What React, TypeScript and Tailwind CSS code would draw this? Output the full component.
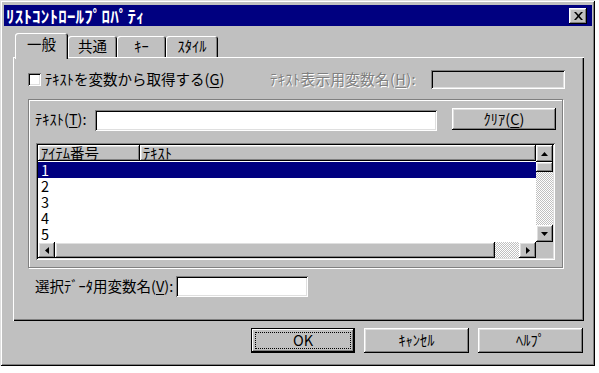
import React from "react";

// Win9x style bevels
const raised =
  "shadow-[inset_-1px_-1px_0_#000,inset_1px_1px_0_#fff,inset_-2px_-2px_0_#808080,inset_2px_2px_0_#dfdfdf]";
const sunken =
  "shadow-[inset_1px_1px_0_#808080,inset_-1px_-1px_0_#fff,inset_2px_2px_0_#000,inset_-2px_-2px_0_#dfdfdf]";
const dither =
  "bg-[image:repeating-conic-gradient(#fff_0_25%,#c0c0c0_0_50%)] bg-[length:2px_2px]";

function Arrow({ dir }: { dir: "up" | "down" | "left" | "right" }) {
  const pts = {
    up: "3.5,0 7,4 0,4",
    down: "0,0 7,0 3.5,4",
    left: "4,0 4,7 0,3.5",
    right: "0,0 4,3.5 0,7",
  }[dir];
  const vertical = dir === "up" || dir === "down";
  return (
    <svg width={vertical ? 7 : 4} height={vertical ? 4 : 7} viewBox={vertical ? "0 0 7 4" : "0 0 4 7"}>
      <polygon points={pts} fill="#000" />
    </svg>
  );
}

function Key({ k }: { k: string }) {
  return <span className="underline underline-offset-2">{k}</span>;
}

function Tab({ label, active, w }: { label: string; active?: boolean; w: string }) {
  return (
    <div
      className={`${w} flex items-center justify-center rounded-t-[3px] bg-[#c0c0c0] shadow-[inset_1px_1px_0_#fff,inset_-1px_0_0_#000,inset_-2px_0_0_#808080] ${
        active ? "h-[26px] pb-[3px]" : "mt-[3px] h-[21px]"
      }`}
    >
      {label}
    </div>
  );
}

export default function App() {
  const rows = ["1", "2", "3", "4", "5"];

  return (
    <div className="w-[599px] h-[373px] bg-white font-['Noto_Sans_CJK_JP',sans-serif] text-[14.5px] leading-none text-black">
      {/* ウィンドウ */}
      <div className="w-[595px] h-[366px] bg-[#c0c0c0] pt-[5px] pl-[4px] shadow-[inset_1px_1px_0_#dfdfdf,inset_-1px_-1px_0_#000,inset_2px_2px_0_#fff,inset_-2px_-2px_0_#808080]">
        {/* タイトルバー */}
        <div className="w-[588px] h-[21px] bg-[#000080] flex items-center justify-between pl-[2px] pr-[5px]">
          <span className="text-white font-bold text-[17px] tracking-[0.2px]">ﾘｽﾄｺﾝﾄﾛｰﾙﾌﾟﾛﾊﾟﾃｨ</span>
          <button className={`w-[18px] h-[16px] bg-[#c0c0c0] flex items-center justify-center ${raised}`}>
            <svg width="9" height="8" viewBox="0 0 9 8">
              <path d="M0 0h2l2.5 2.8L7 0h2L5.5 4 9 8H7L4.5 5.2 2 8H0l3.5-4z" fill="#000" />
            </svg>
          </button>
        </div>

        <div className="pl-[9px]">
          {/* タブ */}
          <div className="relative z-10 flex items-start h-[24px] mt-[7px] pl-[2px]">
            <Tab label="一般" active w="w-[53px]" />
            <Tab label="共通" w="w-[49px]" />
            <Tab label="ｷｰ" w="w-[49px]" />
            <Tab label="ｽﾀｲﾙ" w="w-[52px]" />
          </div>

          {/* タブパネル */}
          <div className="w-[571px] h-[264px] flex flex-col shadow-[inset_1px_1px_0_#fff,inset_-1px_-1px_0_#000,inset_-2px_-2px_0_#808080]">
            <div className="flex items-center h-[19px] mt-[13px] pl-[15px]">
              <div className="w-[242px] flex items-center gap-[4px]">
                <span className={`w-[13px] h-[13px] bg-white ${sunken}`} />
                <span>
                  ﾃｷｽﾄを変数から取得する(<Key k="G" />)
                </span>
              </div>
              <span className="w-[161px] text-[#808080] [text-shadow:1px_1px_0_#fff] tracking-[0.4px]">
                ﾃｷｽﾄ表示用変数名(<Key k="H" />):
              </span>
              <div className={`w-[134px] h-[19px] bg-[#c0c0c0] ${sunken}`} />
            </div>

            {/* グループ */}
            <div className="ml-[15px] mt-[10px] w-[535px] h-[169px] border border-[#808080] shadow-[inset_1px_1px_0_#fff,1px_1px_0_#fff] flex flex-col">
              <div className="flex items-center h-[22px] mt-[8px] pl-[6px]">
                <span className="w-[60px]">
                  ﾃｷｽﾄ(<Key k="T" />):
                </span>
                <div className={`w-[342px] h-[21px] mt-[3px] bg-white ${sunken}`} />
                <button className={`ml-[15px] w-[104px] h-[22px] bg-[#c0c0c0] ${raised}`}>
                  ｸﾘｱ(<Key k="C" />)
                </button>
              </div>

              {/* リストビュー */}
              <div className={`ml-[7px] mt-[13px] w-[519px] h-[117px] bg-white p-[2px] ${sunken}`}>
                <div className="flex h-full">
                  <div className="flex-1 flex flex-col min-w-0">
                    <div className="flex h-[16px] bg-[#c0c0c0]">
                      <div className={`w-[102px] flex items-center pl-[3px] ${raised}`}>ｱｲﾃﾑ番号</div>
                      <div className={`flex-1 flex items-center pl-[3px] ${raised}`}>ﾃｷｽﾄ</div>
                    </div>
                    <div className="flex-1 flex flex-col pt-[1px]">
                      {rows.map((r, i) => (
                        <div
                          key={r}
                          className={`h-[16px] flex items-center pl-[3px] ${
                            i === 0 ? "bg-[#000080] text-white" : ""
                          }`}
                        >
                          {r}
                        </div>
                      ))}
                    </div>
                    {/* 横スクロールバー */}
                    <div className="h-[16px] flex bg-[#c0c0c0]">
                      <div className={`w-[17px] flex items-center justify-center ${raised}`}>
                        <Arrow dir="left" />
                      </div>
                      <div className={`w-[440px] ${raised}`} />
                      <div className={`flex-1 ${dither}`} />
                      <div className={`w-[17px] flex items-center justify-center ${raised}`}>
                        <Arrow dir="right" />
                      </div>
                    </div>
                  </div>
                  {/* 縦スクロールバー */}
                  <div className="w-[17px] flex flex-col bg-[#c0c0c0]">
                    <div className={`h-[17px] flex items-center justify-center ${raised}`}>
                      <Arrow dir="up" />
                    </div>
                    <div className={`h-[10px] ${raised}`} />
                    <div className={`flex-1 ${dither}`} />
                    <div className={`h-[17px] flex items-center justify-center ${raised}`}>
                      <Arrow dir="down" />
                    </div>
                    <div className="h-[16px]" />
                  </div>
                </div>
              </div>
            </div>

            <div className="flex items-center h-[22px] mt-[7px] pl-[22px]">
              <span className="w-[141px]">
                選択ﾃﾞｰﾀ用変数名(<Key k="V" />):
              </span>
              <div className={`w-[132px] h-[21px] bg-white ${sunken}`} />
            </div>
          </div>

          {/* ボタン */}
          <div className="flex justify-end gap-[9px] mt-[7px] pr-[12px]">
            <button className="w-[104px] h-[25px] bg-[#c0c0c0] border border-black shadow-[inset_-1px_-1px_0_#000,inset_1px_1px_0_#fff,inset_-2px_-2px_0_#808080] p-[3px]">
              <div className="w-full h-full border border-dotted border-black flex items-center justify-center">OK</div>
            </button>
            <button className={`w-[105px] h-[25px] bg-[#c0c0c0] ${raised}`}>ｷｬﾝｾﾙ</button>
            <button className={`w-[105px] h-[25px] bg-[#c0c0c0] ${raised}`}>ﾍﾙﾌﾟ</button>
          </div>
        </div>
      </div>
    </div>
  );
}
